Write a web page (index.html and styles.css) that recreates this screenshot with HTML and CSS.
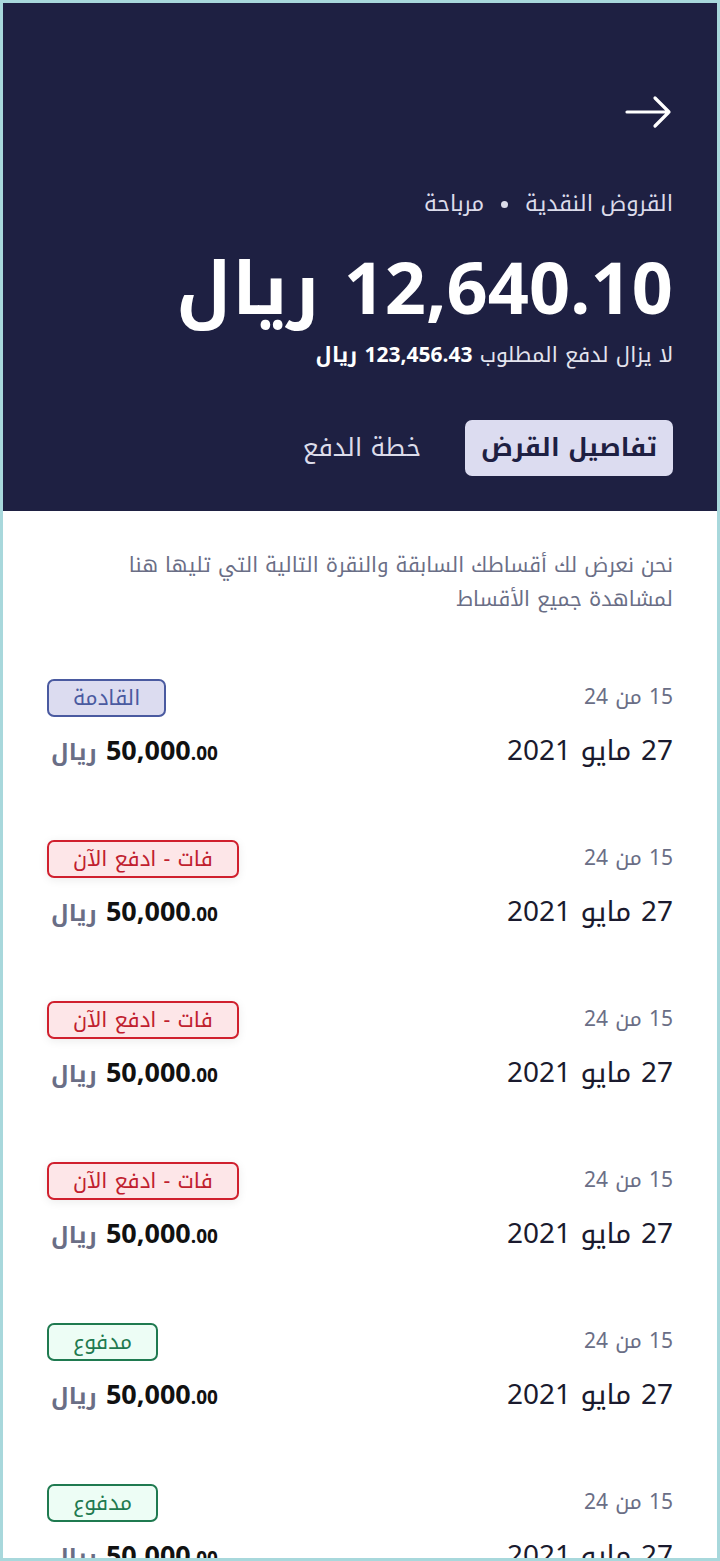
FILE: index.html
```html
<!DOCTYPE html>
<html lang="ar" dir="rtl">
<head>
<meta charset="utf-8">
<title>تفاصيل القرض</title>
<link rel="stylesheet" href="styles.css">
</head>
<body>
<div class="frame">
  <header class="hero">
    <div class="back">
      <svg width="48" height="34" viewBox="0 0 48 34" fill="none" stroke="#ffffff" stroke-width="3.2" stroke-linecap="round" stroke-linejoin="round"><path d="M2 17H44M30 3L44 17L30 31"/></svg>
    </div>
    <div class="crumbs"><span>القروض النقدية</span><span class="dot"></span><span>مرباحة</span></div>
    <div class="amount">12,640.10 ريال</div>
    <div class="remain">لا يزال لدفع المطلوب <b>123,456.43 ريال</b></div>
    <div class="tabs">
      <div class="tab active">تفاصيل القرض</div>
      <div class="tab">خطة الدفع</div>
    </div>
  </header>
  <main class="content">
    <p class="intro">نحن نعرض لك أقساطك السابقة والنقرة التالية التي تليها هنا لمشاهدة جميع الأقساط</p>
    <div class="list">
      <div class="row">
        <div class="col-r"><div class="count">15 من 24</div><div class="date">27 مايو 2021</div></div>
        <div class="col-l"><span class="badge upcoming">القادمة</span><div class="money"><b>50,000<small>.00</small></b> <span class="cur">ريال</span></div></div>
      </div>
      <div class="row">
        <div class="col-r"><div class="count">15 من 24</div><div class="date">27 مايو 2021</div></div>
        <div class="col-l"><span class="badge overdue">فات - ادفع الآن</span><div class="money"><b>50,000<small>.00</small></b> <span class="cur">ريال</span></div></div>
      </div>
      <div class="row">
        <div class="col-r"><div class="count">15 من 24</div><div class="date">27 مايو 2021</div></div>
        <div class="col-l"><span class="badge overdue">فات - ادفع الآن</span><div class="money"><b>50,000<small>.00</small></b> <span class="cur">ريال</span></div></div>
      </div>
      <div class="row">
        <div class="col-r"><div class="count">15 من 24</div><div class="date">27 مايو 2021</div></div>
        <div class="col-l"><span class="badge overdue">فات - ادفع الآن</span><div class="money"><b>50,000<small>.00</small></b> <span class="cur">ريال</span></div></div>
      </div>
      <div class="row">
        <div class="col-r"><div class="count">15 من 24</div><div class="date">27 مايو 2021</div></div>
        <div class="col-l"><span class="badge paid">مدفوع</span><div class="money"><b>50,000<small>.00</small></b> <span class="cur">ريال</span></div></div>
      </div>
      <div class="row">
        <div class="col-r"><div class="count">15 من 24</div><div class="date">27 مايو 2021</div></div>
        <div class="col-l"><span class="badge paid">مدفوع</span><div class="money"><b>50,000<small>.00</small></b> <span class="cur">ريال</span></div></div>
      </div>
    </div>
  </main>
</div>
</body>
</html>
```
FILE: styles.css
```css
* { box-sizing: border-box; }
html, body { margin: 0; padding: 0; }
body {
  font-family: "Noto Kufi Arabic", "Noto Sans Arabic", "Noto Sans", "DejaVu Sans", sans-serif;
  background: #ffffff;
}
.frame {
  width: 720px;
  height: 1561px;
  border: 3px solid #a8d8dc;
  overflow: hidden;
  background: #ffffff;
}
.hero {
  background: #1e2042;
  color: #ffffff;
  padding: 92px 44px 30px 44px;
  height: 508px;
}
.back { display: flex; justify-content: flex-start; height: 36px; }
.crumbs {
  margin-top: 58px;
  display: flex;
  align-items: center;
  gap: 17px;
  font-size: 22px;
  color: #dcdcea;
  line-height: 30px;
}
.dot { width: 7px; height: 7px; border-radius: 50%; background: #dcdcea; }
.amount {
  margin-top: 21px;
  font-size: 72px;
  font-weight: 700;
  line-height: 100px;
}
.remain {
  margin-top: 0;
  font-size: 21px;
  color: #e4e4ee;
  line-height: 30px;
}
.remain b { color: #ffffff; }
.tabs {
  margin-top: 50px;
  display: flex;
  align-items: center;
  gap: 44px;
}
.tab { font-size: 25px; color: #dcdcea; line-height: 30px; }
.tab.active {
  background: #dcdcf0;
  color: #1e2042;
  font-weight: 700;
  font-size: 25px;
  border-radius: 7px;
  padding: 13px 16px;
}
.content { padding: 38px 44px 0 44px; }
.intro {
  margin: 0;
  max-width: 590px;
  font-size: 20.5px;
  line-height: 34px;
  color: #6a6e86;
}
.list { margin-top: 62px; display: flex; flex-direction: column; gap: 52px; }
.row { display: flex; justify-content: space-between; align-items: flex-start; height: 109px; }
.col-r, .col-l { display: flex; flex-direction: column; gap: 14px; }
.col-r { gap: 16px; }
.col-l { align-items: flex-end; }
.count { font-size: 21px; color: #6a6e86; line-height: 36px; }
.date { font-size: 28px; color: #1a1a2e; line-height: 40px; }
.badge {
  display: inline-block;
  font-size: 21px;
  line-height: 34px;
  height: 38px;
  padding: 0 24px;
  border: 2px solid;
  border-radius: 7px;
}
.badge.upcoming { background: #dcdcf0; border-color: #4a5aa0; color: #4a5aa0; }
.badge.overdue { background: #fde6e8; border-color: #d0202e; color: #c0202e; box-shadow: 0 2px 10px rgba(0,0,0,0.08); }
.badge.paid { background: #edfdf5; border-color: #1f7a50; color: #1f7a50; }
.money { font-size: 27px; line-height: 40px; color: #111111; margin-left: 4px; }
.money b { font-weight: 700; }
.money small { font-size: 19px; }
.cur { color: #6a6e86; font-weight: 700; font-size: 23px; }
```
